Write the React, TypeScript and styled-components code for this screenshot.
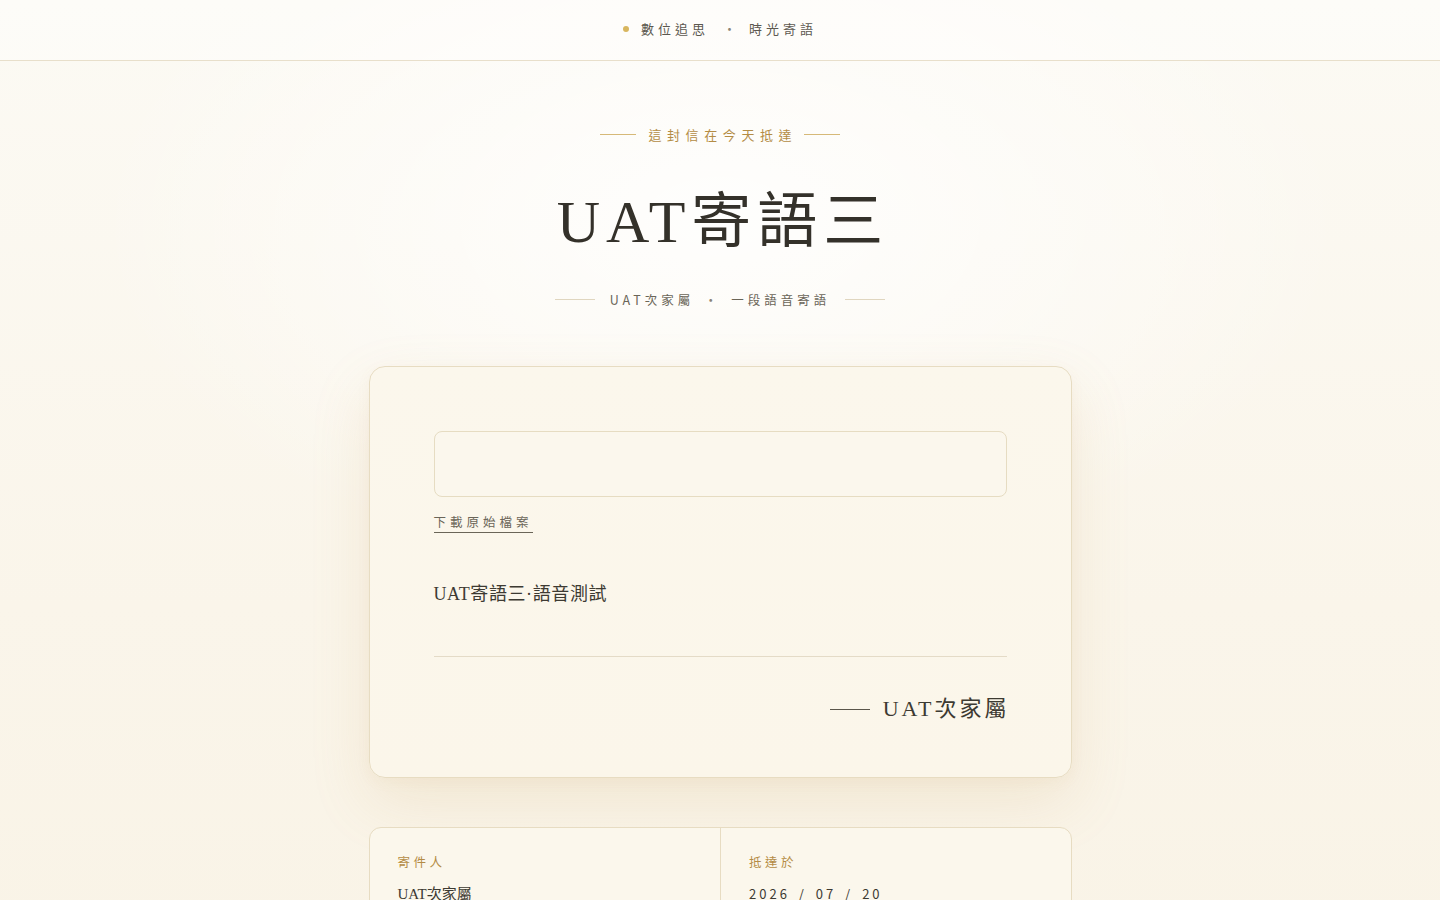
import React from 'react';
import styled, { createGlobalStyle } from 'styled-components';

const SANS = `"Noto Sans CJK TC", "Noto Sans", sans-serif`;
const SERIF = `"Liberation Serif", "Noto Sans CJK TC", serif`;

const GlobalStyle = createGlobalStyle`
  html, body {
    margin: 0;
    padding: 0;
  }
  body {
    min-height: 100vh;
    font-family: ${SANS};
    color: #3a362e;
    background-color: #faf5ea;
    background-image:
      radial-gradient(ellipse 900px 520px at 50% 220px, rgba(255, 255, 255, 0.85), rgba(255, 255, 255, 0) 70%),
      linear-gradient(180deg, #fcfaf4 0%, #faf5ea 60%, #f9f3e6 100%);
  }
`;

function Letter() {
  return (
    <Page>
      <GlobalStyle />
      <Header>
        <Dot />
        <HeaderText>數位追思</HeaderText>
        <HeaderSep>·</HeaderSep>
        <HeaderText>時光寄語</HeaderText>
      </Header>

      <Hero>
        <Eyebrow>
          <Rule $width={36} $color="#d6b978" />
          <EyebrowText>這封信在今天抵達</EyebrowText>
          <Rule $width={36} $color="#d6b978" />
        </Eyebrow>
        <Title>UAT寄語三</Title>
        <Subtitle>
          <Rule $width={40} $color="#e0d6bf" />
          <SubtitleText>UAT次家屬</SubtitleText>
          <SubtitleSep>·</SubtitleSep>
          <SubtitleText>一段語音寄語</SubtitleText>
          <Rule $width={40} $color="#e0d6bf" />
        </Subtitle>
      </Hero>

      <Card>
        <AudioBox />
        <DownloadLink href="#">下載原始檔案</DownloadLink>
        <Message>UAT寄語三·語音測試</Message>
        <Divider />
        <Signature>
          <Rule $width={40} $color="#5a554a" />
          <SignatureName>UAT次家屬</SignatureName>
        </Signature>
      </Card>

      <InfoGrid>
        <InfoCell>
          <InfoLabel>寄件人</InfoLabel>
          <InfoValue>UAT次家屬</InfoValue>
        </InfoCell>
        <InfoCell>
          <InfoLabel>抵達於</InfoLabel>
          <InfoDate>2026 / 07 / 20</InfoDate>
        </InfoCell>
      </InfoGrid>
    </Page>
  );
}

export default function App() {
  return <Letter />;
}

const Page = styled.div`
  display: flex;
  flex-direction: column;
  align-items: center;
  padding-bottom: 80px;
`;

const Header = styled.header`
  width: 100%;
  height: 61px;
  padding-bottom: 3px;
  display: flex;
  justify-content: center;
  align-items: center;
  border-bottom: 1px solid #e8dfcb;
  background: rgba(255, 255, 255, 0.35);
  box-sizing: border-box;
`;

const Dot = styled.span`
  width: 6px;
  height: 6px;
  border-radius: 50%;
  background: #d8b65e;
  margin-right: 12px;
`;

const HeaderText = styled.span`
  font-size: 13px;
  letter-spacing: 4px;
  color: #5c584f;
`;

const HeaderSep = styled.span`
  font-size: 13px;
  color: #8a8476;
  margin: 0 13px 0 14px;
`;

const Hero = styled.section`
  display: flex;
  flex-direction: column;
  align-items: center;
  padding-top: 63px;
`;

const Eyebrow = styled.div`
  display: flex;
  align-items: center;
  gap: 12px;
  height: 20px;
`;

const Rule = styled.span<{ $width: number; $color: string }>`
  display: block;
  width: ${(p) => p.$width}px;
  height: 1px;
  background: ${(p) => p.$color};
`;

const EyebrowText = styled.span`
  font-size: 13px;
  letter-spacing: 5.6px;
  margin-right: -5.6px;
  color: #b48c45;
`;

const Title = styled.h1`
  margin: 42px -6px 0 0;
  font-family: ${SERIF};
  font-weight: 400;
  font-size: 60px;
  line-height: 72px;
  letter-spacing: 6px;
  color: #34312a;
`;

const Subtitle = styled.div`
  display: flex;
  align-items: center;
  gap: 15px;
  margin-top: 31px;
  height: 20px;
`;

const SubtitleText = styled.span`
  font-size: 12.5px;
  letter-spacing: 4px;
  color: #6a6558;
`;

const SubtitleSep = styled.span`
  font-size: 13px;
  color: #8a8476;
  margin: 0 -1px 0 -5px;
`;

const Card = styled.article`
  margin-top: 57px;
  width: 703px;
  box-sizing: border-box;
  padding: 64px 64px 52px;
  border: 1px solid #e7dcc2;
  border-radius: 16px;
  background: linear-gradient(180deg, #fbf7ec 0%, #fbf6ea 100%);
  box-shadow: 0 24px 60px rgba(196, 160, 96, 0.16), 0 4px 14px rgba(196, 160, 96, 0.06);
  display: flex;
  flex-direction: column;
`;

const AudioBox = styled.div`
  height: 66px;
  box-sizing: border-box;
  border: 1px solid #e6dcc2;
  border-radius: 8px;
  background: #fbf7ed;
`;

const DownloadLink = styled.a`
  align-self: flex-start;
  margin-top: 15px;
  font-size: 12.5px;
  line-height: 20px;
  letter-spacing: 4px;
  color: #6a6558;
  text-decoration: none;
  border-bottom: 1px solid #6a6558;
`;

const Message = styled.p`
  margin: 45px 0 0;
  font-family: ${SERIF};
  font-size: 18px;
  line-height: 32px;
  letter-spacing: 0.6px;
  color: #3d3a32;
`;

const Divider = styled.hr`
  margin: 46px 0 0;
  border: none;
  height: 1px;
  background: #e4dbc7;
`;

const Signature = styled.div`
  margin-top: 36px;
  display: flex;
  justify-content: flex-end;
  align-items: center;
  gap: 13px;
`;

const SignatureName = styled.span`
  font-family: ${SERIF};
  font-size: 22px;
  line-height: 32px;
  letter-spacing: 3px;
  margin-right: -3px;
  color: #3d3a32;
`;

const InfoGrid = styled.section`
  margin-top: 49px;
  width: 703px;
  box-sizing: border-box;
  display: grid;
  grid-template-columns: 1fr 1fr;
  border: 1px solid #e7dcc2;
  border-radius: 12px;
  background: #fbf7ec;
`;

const InfoCell = styled.div`
  padding: 24px 28px 24px;
  & + & {
    border-left: 1px solid #e7dcc2;
  }
`;

const InfoLabel = styled.div`
  font-size: 12.5px;
  line-height: 20px;
  letter-spacing: 3.5px;
  color: #b48c45;
`;

const InfoValue = styled.div`
  margin-top: 12px;
  font-family: ${SERIF};
  font-size: 15px;
  line-height: 20px;
  color: #3d3a32;
`;

const InfoDate = styled.div`
  margin-top: 12px;
  font-size: 13px;
  line-height: 20px;
  letter-spacing: 3px;
  word-spacing: 3px;
  color: #3d3a32;
`;
